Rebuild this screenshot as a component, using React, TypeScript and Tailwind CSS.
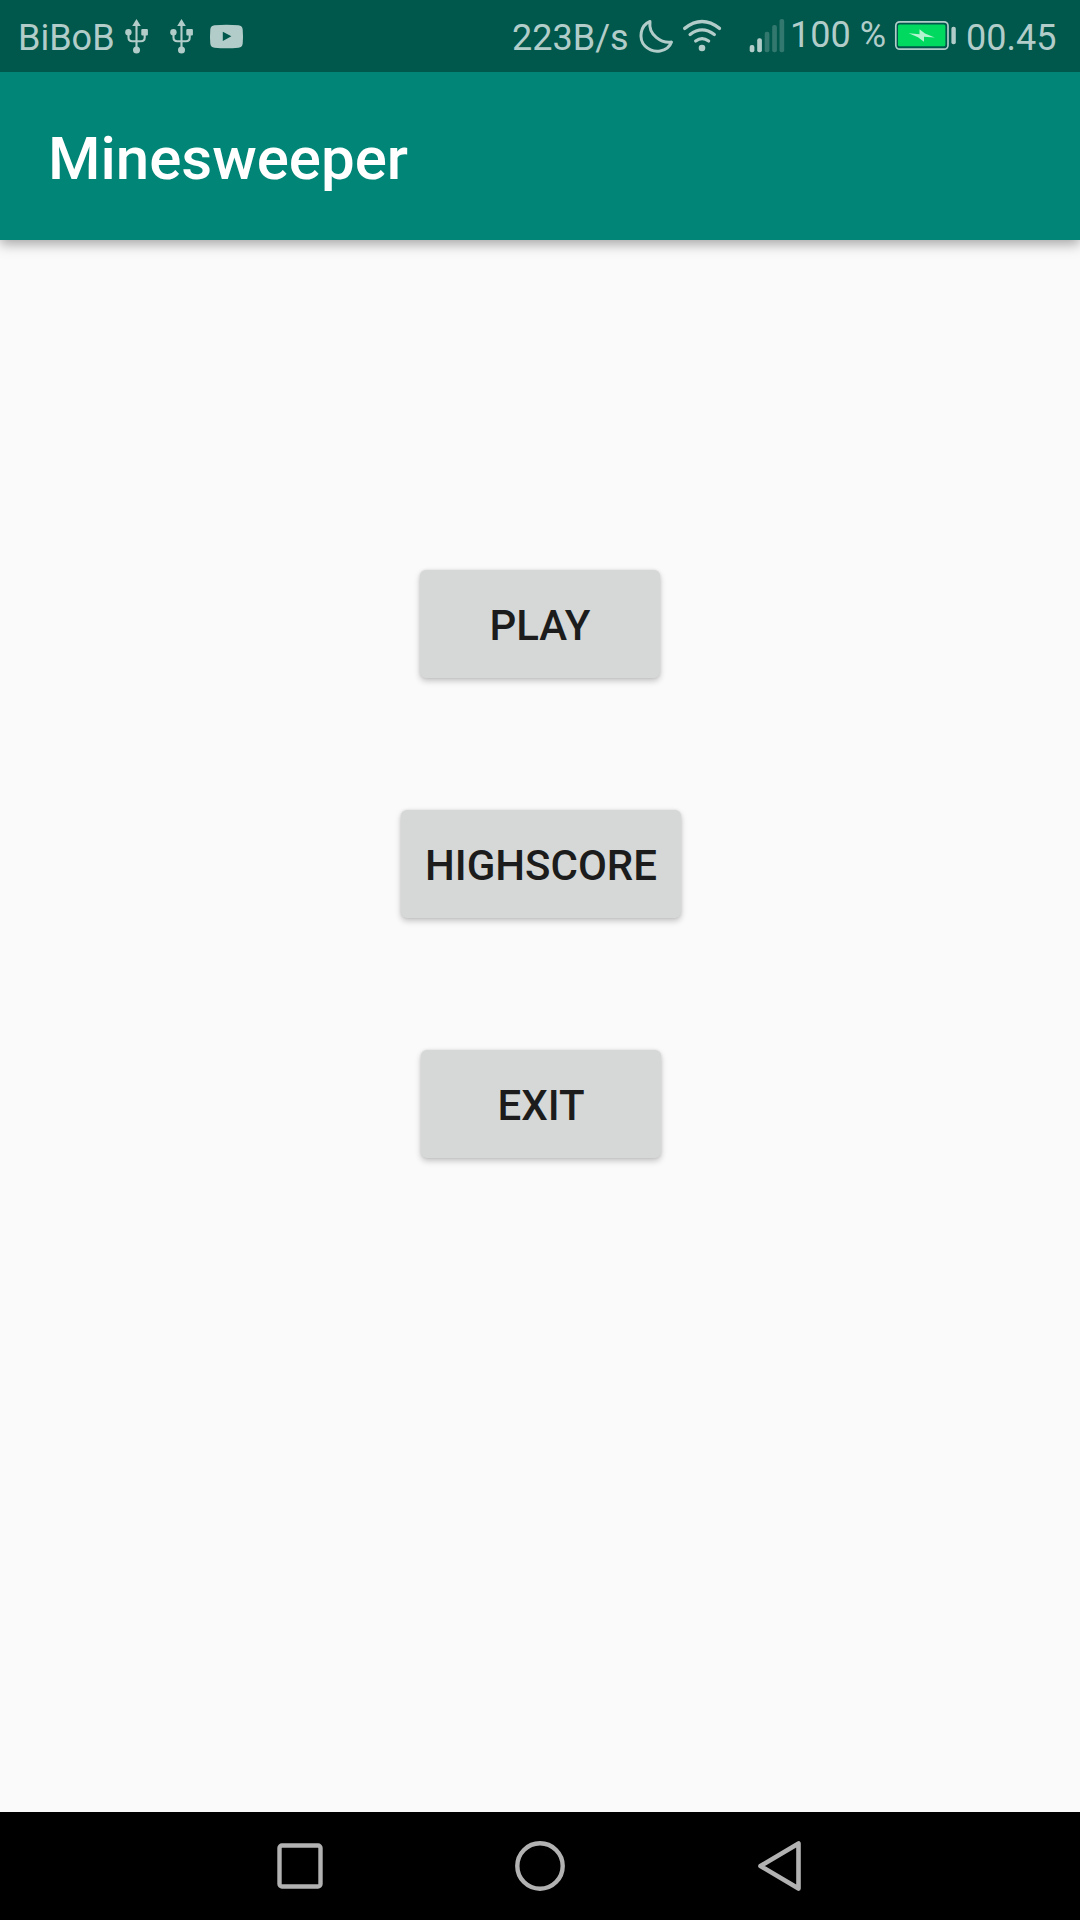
import React from "react";

const INK = "#b2cdc9";

function UsbIcon() {
  return (
    <svg className="h-[72px] w-[45px] shrink-0" viewBox="114 0 45 72" fill="none">
      <path d="M136.5 24V49M128.5 32V37.5Q128.5 41.2 132.2 41.2H141Q144.7 41.2 144.7 37.5V32" stroke={INK} strokeWidth="2.1" />
      <path d="M136.5 19L140.8 26H132.2Z" fill={INK} />
      <circle cx="136.5" cy="50" r="3.5" fill={INK} />
      <circle cx="128.4" cy="32.3" r="3.2" fill={INK} />
      <rect x="141.3" y="29" width="6.6" height="6.5" rx="1" fill={INK} />
    </svg>
  );
}

function VideoIcon() {
  return (
    <svg className="h-[72px] w-[45px] shrink-0" viewBox="204 0 45 72">
      <path
        fillRule="evenodd"
        fill={INK}
        d="M214.5 25.3Q226.5 24.3 238.5 25.3Q242.4 25.7 242.7 29.5Q243.3 36.5 242.7 43.5Q242.4 47.3 238.5 47.7Q226.5 48.7 214.5 47.7Q210.6 47.3 210.3 43.5Q209.7 36.5 210.3 29.5Q210.6 25.7 214.5 25.3ZM222.8 31.7V41L231.4 36.3Z"
      />
    </svg>
  );
}

function MoonIcon() {
  return (
    <svg className="h-[72px] w-[44px] shrink-0" viewBox="636 0 44 72">
      <path
        d="M650 21.5C640 25.5 638.3 39 645 46C653.5 54.5 668 52 671.5 42.1C661.5 43.5 648 35 650 21.5Z"
        fill="none"
        stroke={INK}
        strokeWidth="3"
        strokeLinejoin="round"
      />
    </svg>
  );
}

function WifiIcon() {
  return (
    <svg className="h-[72px] w-[64px] shrink-0" viewBox="680 0 64 72">
      <g fill="none" stroke={INK} strokeWidth="3.3" strokeLinecap="round">
        <path d="M684.7 28.4Q702 14.6 719.5 28.4" />
        <path d="M690.1 34.5Q702 25.3 714.3 34.5" />
        <path d="M695.7 41Q702 36.2 708.6 41" />
      </g>
      <circle cx="702" cy="48" r="3.3" fill={INK} />
    </svg>
  );
}

function SignalIcon() {
  return (
    <svg className="h-[72px] w-[46px] shrink-0" viewBox="744 0 46 72" fill={INK}>
      <rect x="749.7" y="45" width="4.7" height="7.2" rx="2" />
      <rect x="757.2" y="38.3" width="4.7" height="13.9" rx="2" />
      <g opacity=".28">
        <rect x="764.7" y="31.7" width="4.7" height="20.5" rx="2" />
        <rect x="772.2" y="25" width="4.7" height="27.2" rx="2" />
        <rect x="779.5" y="19" width="4.7" height="33.2" rx="2" />
      </g>
    </svg>
  );
}

function BatteryIcon() {
  return (
    <svg className="h-[72px] w-[74px] shrink-0" viewBox="891 0 74 72">
      <rect x="895.8" y="21.8" width="52.2" height="27.4" rx="4" fill="none" stroke={INK} strokeWidth="1.7" />
      <rect x="898" y="24.6" width="47.4" height="21.7" rx="1.5" fill="#00d95f" />
      <path d="M908.7 33.3L919.5 34.3V29.3L925 33.4L934.7 37.4L924 36.8V41.7L918 37.2Z" fill="#b2f4cf" />
      <rect x="951.4" y="26.7" width="4.4" height="17.6" rx="2" fill={INK} />
    </svg>
  );
}

function StatusBar() {
  return (
    <header className="z-10 flex h-[72px] shrink-0 overflow-hidden whitespace-nowrap bg-[#00574b] pl-[18px] text-[36px] leading-[77px] text-[#b2cdc9]">
      <span className="w-24 shrink-0">BiBoB</span>
      <UsbIcon />
      <UsbIcon />
      <VideoIcon />
      <span className="ml-auto w-[124px] shrink-0">223B/s</span>
      <MoonIcon />
      <WifiIcon />
      <SignalIcon />
      <span className="w-[101px] shrink-0 leading-[71px]">100 %</span>
      <BatteryIcon />
      <span className="w-[115px] shrink-0 pl-px">00.45</span>
    </header>
  );
}

function MenuButton({ label, className }: { label: string; className: string }) {
  return (
    <button
      className={`h-[108px] rounded-[6px] bg-[#d6d8d7] text-[42px] leading-[108px] pt-[2px] font-medium text-[#1c1c1c] shadow-[0_3px_6px_rgba(0,0,0,0.22),0_0_3px_rgba(0,0,0,0.10)] ${className}`}
    >
      {label}
    </button>
  );
}

function NavigationBar() {
  return (
    <nav className="flex h-[108px] shrink-0 items-center justify-center gap-[180px] bg-black">
      <svg className="size-[60px]" viewBox="0 0 60 60" fill="none" stroke="#b2b2b2" strokeWidth="4.4">
        <rect x="9.5" y="9.5" width="41" height="41" rx="2.5" />
      </svg>
      <svg className="size-[60px]" viewBox="0 0 60 60" fill="none" stroke="#b2b2b2" strokeWidth="4.4">
        <circle cx="30" cy="30" r="22.7" />
      </svg>
      <svg className="size-[60px]" viewBox="0 0 60 60" fill="none" stroke="#b2b2b2" strokeWidth="4.6" strokeLinejoin="round">
        <path d="M48.5 7.4V52.6L10.5 30Z" />
      </svg>
    </nav>
  );
}

export default function App() {
  return (
    <div className="flex h-[1920px] w-[1080px] flex-col overflow-hidden bg-[#fafafa] font-['Roboto',sans-serif]">
      <StatusBar />
      <div className="h-[168px] shrink-0 bg-[#008577] pl-12 shadow-[0_4px_12px_rgba(0,0,0,0.35)]">
        <h1 className="text-[60px] leading-[173px] font-medium text-white">Minesweeper</h1>
      </div>
      <main className="flex flex-1 flex-col items-center gap-[132px] pt-[330px]">
        <MenuButton label="PLAY" className="w-[240px]" />
        <MenuButton label="HIGHSCORE" className="ml-[2px] w-[280px]" />
        <MenuButton label="EXIT" className="ml-[2px] w-[240px]" />
      </main>
      <NavigationBar />
    </div>
  );
}
